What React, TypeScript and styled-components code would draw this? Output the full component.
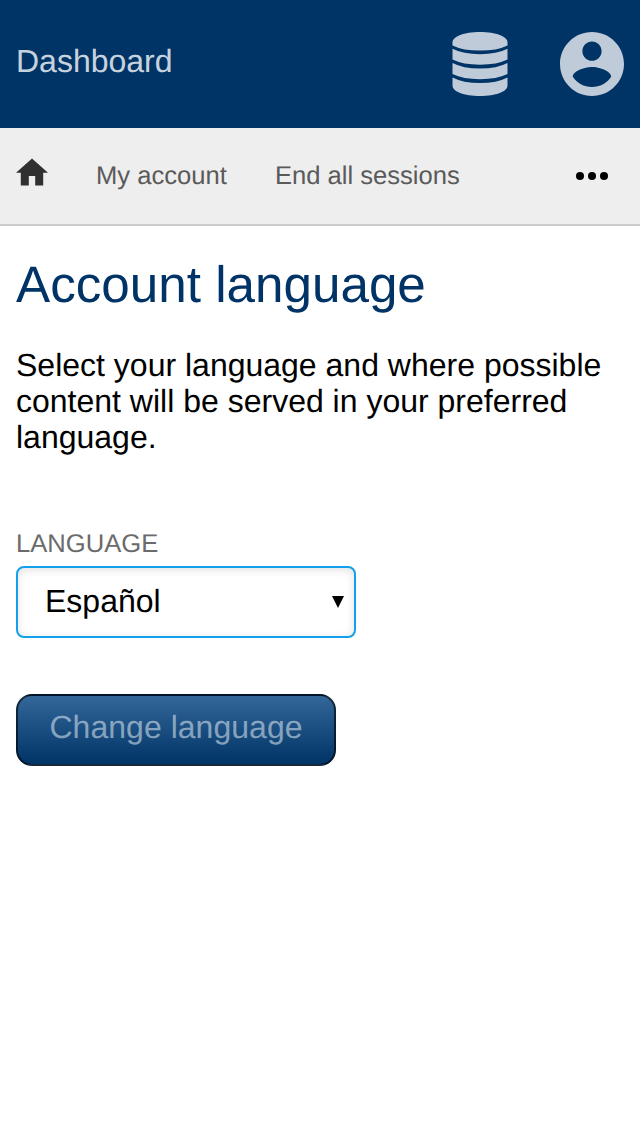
import React from 'react';
import styled, { createGlobalStyle } from 'styled-components';

const GlobalStyle = createGlobalStyle`
  *, *::before, *::after { box-sizing: border-box; }
  body {
    margin: 0;
    background: #fff;
    color: #000;
    font-family: "Liberation Sans", Arial, Helvetica, sans-serif;
    font-size: 32px;
    line-height: 36px;
    text-rendering: geometricPrecision;
  }
`;

const Header = styled.header`
  display: flex;
  justify-content: space-between;
  height: 128px;
  padding: 32px 16px;
  background: #003366;
`;

const Brand = styled.a`
  padding-top: 11px;
  color: rgba(255, 255, 255, 0.8);
`;

const HeaderIcons = styled.div`
  display: flex;
  gap: 48px;
  color: rgba(255, 255, 255, 0.75);
`;

const Icon = styled.svg`
  display: block;
  fill: currentColor;
`;

const Nav = styled.nav`
  display: flex;
  gap: 48px;
  height: 98px;
  padding: 30px 32px 0 16px;
  background: #eee;
  border-bottom: 2px solid #ccc;
  font-size: 25.6px;
`;

const HomeLink = styled.a`
  color: #303030;
`;

const NavLink = styled.a`
  color: #5a5a5a;
`;

const MoreButton = styled.a`
  margin: 14px 0 0 auto;
  color: #000;
`;

const Main = styled.main`
  padding: 29px 16px;
`;

const Title = styled.h1`
  margin: 0 0 32px;
  color: #003366;
  font-size: 51.2px;
  font-weight: 400;
  line-height: 60px;
`;

const Intro = styled.p`
  margin: 0 0 73px;
`;

const Label = styled.label`
  display: block;
  margin-bottom: 6px;
  color: #6b6b6b;
  font-size: 25.6px;
  line-height: 32px;
  text-transform: uppercase;
`;

const Select = styled.div`
  display: flex;
  justify-content: space-between;
  width: 340px;
  height: 72px;
  margin-bottom: 56px;
  padding: 15px 10px 0 27px;
  border: 2px solid #139fea;
  border-radius: 8px;
  background: #fff;
  box-shadow: inset 0 2px 8px rgba(0, 0, 0, 0.12);
`;

const Arrow = styled(Icon)`
  margin-top: 13px;
`;

const Submit = styled.button`
  display: block;
  width: 320px;
  height: 72px;
  padding: 0 0 6px;
  border: 2px solid rgba(0, 0, 0, 0.6);
  border-radius: 16px;
  background: linear-gradient(#336699, #003366);
  color: rgba(245, 252, 255, 0.5);
  font: inherit;
  letter-spacing: 0.03px;
  text-rendering: inherit;
`;

export default function App() {
  return (
    <>
      <GlobalStyle />
      <Header>
        <Brand>Dashboard</Brand>
        <HeaderIcons>
          <Icon width="64" height="64" viewBox="0 0 64 64">
            <path d="M32 0C48 0 59.5 4.6 59.5 10.3V13.4Q49 18.6 32 18.6T4.5 13.4V10.3C4.5 4.6 16 0 32 0Z" />
            <path d="M4.5 16.8Q15 22.2 32 22.2T59.5 16.8V27.6Q49 32.8 32 32.8T4.5 27.6Z" />
            <path d="M4.5 31.1Q15 36.6 32 36.6T59.5 31.1V42Q49 47.2 32 47.2T4.5 42Z" />
            <path d="M4.5 45.5Q15 51 32 51T59.5 45.5V53.7C59.5 59.4 48 64 32 64S4.5 59.4 4.5 53.7Z" />
          </Icon>
          <Icon width="64" height="64" viewBox="2 2 20 20">
            <path d="M12 2C6.48 2 2 6.48 2 12s4.48 10 10 10 10-4.48 10-10S17.52 2 12 2zm0 3c1.66 0 3 1.34 3 3s-1.34 3-3 3-3-1.34-3-3 1.34-3 3-3zm0 14.2c-2.5 0-4.71-1.28-6-3.22.03-1.99 4-3.08 6-3.08 1.99 0 5.97 1.09 6 3.08-1.29 1.94-3.5 3.22-6 3.22z" />
          </Icon>
        </HeaderIcons>
      </Header>
      <Nav>
        <HomeLink aria-label="Home">
          <Icon width="32" height="28" viewBox="2 2.75 20 17.5">
            <path d="M10 20v-6h4v6h5v-8h3L12 3 2 12h3v8z" />
          </Icon>
        </HomeLink>
        <NavLink>My account</NavLink>
        <NavLink>End all sessions</NavLink>
        <MoreButton aria-label="More">
          <Icon width="32" height="8" viewBox="0 0 32 8">
            <circle cx="4" cy="4" r="4" />
            <circle cx="16" cy="4" r="4" />
            <circle cx="28" cy="4" r="4" />
          </Icon>
        </MoreButton>
      </Nav>
      <Main>
        <Title>Account language</Title>
        <Intro>
          Select your language and where possible content will be served in your preferred language.
        </Intro>
        <Label>Language</Label>
        <Select>
          <span>Español</span>
          <Arrow width="12" height="12" viewBox="0 0 12 12">
            <path d="M0 0h12L6 12z" />
          </Arrow>
        </Select>
        <Submit disabled>Change language</Submit>
      </Main>
    </>
  );
}
